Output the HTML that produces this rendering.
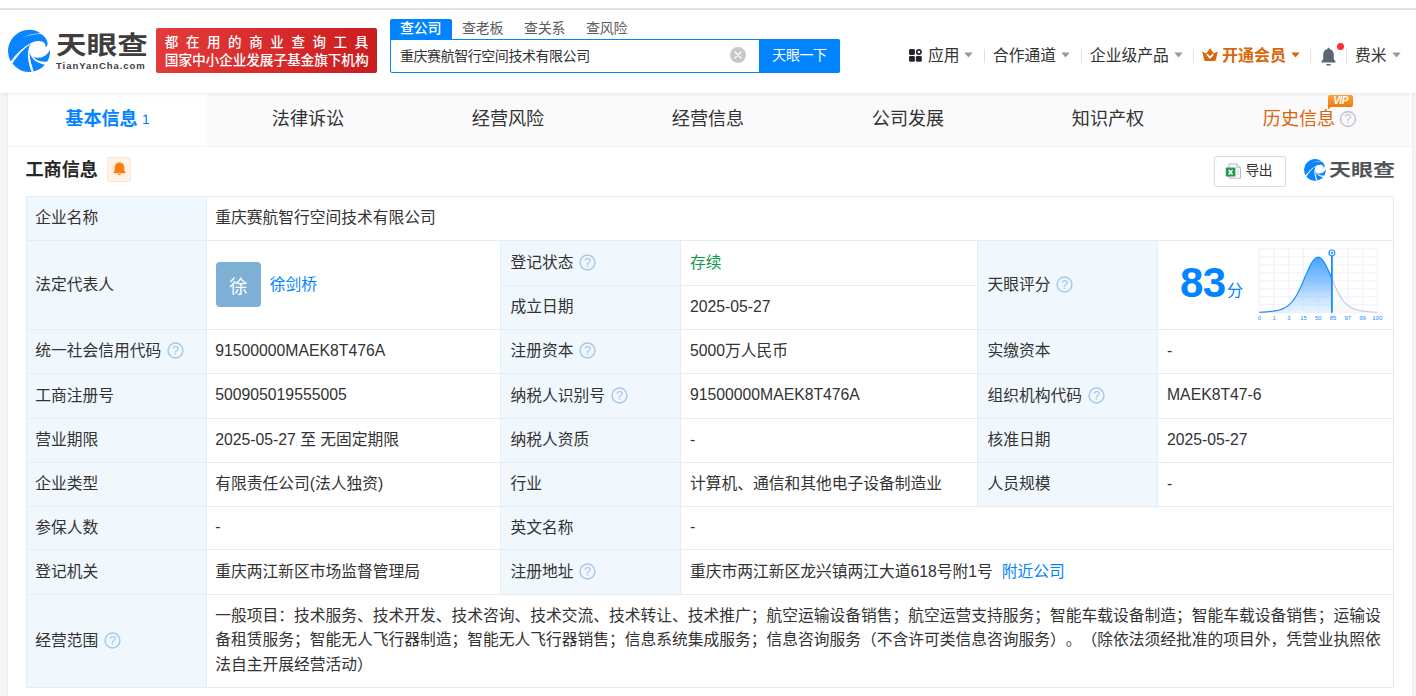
<!DOCTYPE html>
<html lang="zh-CN">
<head>
<meta charset="utf-8">
<title>重庆赛航智行空间技术有限公司 - 天眼查</title>
<style>
*{box-sizing:border-box;margin:0;padding:0}
html,body{width:1416px;height:696px;overflow:hidden}
body{background:#f5f5f5;font-family:"Liberation Sans","Noto Sans CJK SC",sans-serif;color:#333;position:relative;font-size:16px}
.abs{position:absolute}
#topstrip{left:0;top:0;width:1416px;height:8px;background:#fff}
#topline{left:0;top:8px;width:1416px;height:2px;background:#e4e4e4}
#header{left:0;top:10px;width:1416px;height:83px;background:#fff;box-shadow:0 1px 5px rgba(0,0,0,.08);z-index:5}
#card{left:7px;top:92px;width:1406px;height:604px;background:#fff;border-left:1px solid #ececec;border-right:1px solid #ececec}
#tabs{left:8px;top:92px;width:1401px;height:54px;background:#fafafa}
#tabline{left:8px;top:146px;width:1404px;height:1px;background:#f3f3f3}
.tab{position:absolute;top:0;height:54px;line-height:55px;transform:translateY(.300px);font-size:18.100px;color:#333;white-space:nowrap;text-align:center;width:200px}
.tab.on{color:#0084ff;font-weight:bold;left:0;width:199px}
.t{position:absolute;white-space:nowrap}
/* table */
.cell{position:absolute;border-right:1px solid #e3edf6;border-bottom:1px solid #e3edf6;font-size:15.750px;text-spacing-trim:space-all;line-height:22px;color:#333;white-space:nowrap}
.lab{background:#f0f7fd}
.cell span.tx{position:absolute;left:9px}
.q{display:inline-block;width:17px;height:17px;vertical-align:-3.200px;margin-left:6px}
a{color:#0084ff;text-decoration:none}
</style>
</head>
<body>
<div class="abs" id="topstrip"></div>
<div class="abs" id="topline"></div>
<div class="abs" id="card"></div>
<div class="abs" id="header">
  <!-- logo -->
  <svg class="abs" style="left:4px;top:16px" width="52" height="50" viewBox="0 0 724 696">
    <g fill="#0a84ff">
    <path d="M95,495 A295,295 0 0 1 510,100 C420,105 330,125 250,162 C330,135 430,112 512,112 C560,135 595,180 607,235 C610,262 595,285 575,300 C585,262 570,235 540,220 C495,200 425,205 372,240 C270,290 165,390 95,495 Z"/>
    <path d="M118,522 C185,412 285,310 365,255 C335,320 325,400 340,480 C350,540 365,590 385,637 A295,295 0 0 1 118,522 Z"/>
    <path d="M415,632 C390,570 370,500 362,440 C358,410 355,385 352,365 C375,440 440,500 500,520 C530,530 550,536 570,540 A295,295 0 0 1 415,632 Z"/>
    <path d="M395,420 C440,445 500,450 550,425 C595,400 625,370 640,330 A295,295 0 0 1 603,495 C540,510 450,480 395,420 Z"/>
    </g>
  </svg>
  <div class="t" style="left:56px;top:15px;font-size:25.500px;line-height:40px;font-weight:bold;color:#423d3d;transform:scaleX(1.2);transform-origin:0 0">天眼查</div>
  <div class="t" style="left:56px;top:49.500px;font-size:9.500px;line-height:12px;font-weight:bold;color:#423d3d;letter-spacing:0.95px">TianYanCha.com</div>
  <!-- red badge -->
  <div class="abs" style="left:156px;top:18px;width:221px;height:45px;border-radius:2px;background:linear-gradient(100deg,#e23c3c 0%,#d62828 60%,#c91d1d 100%)"></div>
  <div class="t" style="left:164.800px;top:22.500px;font-size:13.500px;line-height:19px;font-weight:500;color:#fff;letter-spacing:7.600px">都在用的商业查询工具</div>
  <div class="t" style="left:164.800px;top:40.500px;font-size:13.750px;line-height:19px;font-weight:500;color:#fff;letter-spacing:-.17px">国家中小企业发展子基金旗下机构</div>
  <!-- search -->
  <div class="abs" style="left:390px;top:9px;width:62px;height:21px;background:#0084ff;border-radius:2px 2px 0 0"></div>
  <div class="t" style="left:400px;top:8px;font-size:14px;line-height:20px;color:#fff;font-weight:500;letter-spacing:-.2px">查公司</div>
  <div class="t" style="left:462px;top:8px;font-size:14px;line-height:20px;color:#5c5c5c;letter-spacing:-.2px">查老板</div>
  <div class="t" style="left:524px;top:8px;font-size:14px;line-height:20px;color:#5c5c5c;letter-spacing:-.2px">查关系</div>
  <div class="t" style="left:586px;top:8px;font-size:14px;line-height:20px;color:#5c5c5c;letter-spacing:-.2px">查风险</div>
  <div class="abs" style="left:390px;top:29px;width:450px;height:34px;border:1px solid #0084ff;border-radius:0 2px 2px 2px;background:#fff"></div>
  <div class="t" style="left:400px;top:34.500px;font-size:14px;line-height:22px;color:#333;letter-spacing:-.45px">重庆赛航智行空间技术有限公司</div>
  <svg class="abs" style="left:730px;top:37px" width="16" height="16" viewBox="0 0 16 16"><circle cx="8" cy="8" r="8" fill="#c8c8c8"/><path d="M5 5 L11 11 M11 5 L5 11" stroke="#fff" stroke-width="1.300" stroke-linecap="round"/></svg>
  <div class="abs" style="left:759px;top:29px;width:81px;height:34px;background:#0084ff;border-radius:0 2px 2px 0"></div>
  <div class="t" style="left:759px;top:33.500px;width:81px;text-align:center;font-size:14px;line-height:22px;color:#fff;font-weight:normal;letter-spacing:-.4px">天眼一下</div>
  <!-- right nav -->
  <svg class="abs" style="left:909px;top:39px" width="13" height="13" viewBox="0 0 13 13"><rect x="0" y="0" width="5.900" height="5.900" rx="1.300" fill="#23272c"/><rect x="0" y="6.900" width="5.900" height="5.900" rx="1.300" fill="#23272c"/><rect x="6.900" y="6.900" width="5.900" height="5.900" rx="1.300" fill="#23272c"/><circle cx="9.900" cy="2.950" r="2.100" fill="none" stroke="#23272c" stroke-width="1.700"/></svg>
  <div class="t" style="left:928px;top:35px;font-size:15.750px;line-height:22px;color:#333">应用</div>
  <div class="t" style="left:993px;top:35px;font-size:15.750px;line-height:22px;color:#333">合作通道</div>
  <div class="t" style="left:1090px;top:35px;font-size:15.750px;line-height:22px;color:#333">企业级产品</div>
  <div class="t" style="left:1222px;top:35px;font-size:16px;line-height:22px;color:#d9660a;font-weight:bold">开通会员</div>
  <div class="t" style="left:1355px;top:35px;font-size:15.750px;line-height:22px;color:#333">费米</div>
<svg class="abs" style="left:964px;top:42px" width="9" height="6" viewBox="0 0 9 6"><path d="M0.800 0.500 L8.200 0.500 Q8.800 0.500 8.400 1 L4.900 5.100 Q4.500 5.500 4.100 5.100 L0.600 1 Q0.200 0.500 0.800 0.500 Z" fill="#9a9a9a"/></svg>
<div class="abs" style="left:984px;top:39px;width:1px;height:14px;background:#e2e2e2"></div>
<svg class="abs" style="left:1061px;top:42px" width="9" height="6" viewBox="0 0 9 6"><path d="M0.800 0.500 L8.200 0.500 Q8.800 0.500 8.400 1 L4.900 5.100 Q4.500 5.500 4.100 5.100 L0.600 1 Q0.200 0.500 0.800 0.500 Z" fill="#9a9a9a"/></svg>
<div class="abs" style="left:1081px;top:39px;width:1px;height:14px;background:#e2e2e2"></div>
<svg class="abs" style="left:1174px;top:42px" width="9" height="6" viewBox="0 0 9 6"><path d="M0.800 0.500 L8.200 0.500 Q8.800 0.500 8.400 1 L4.900 5.100 Q4.500 5.500 4.100 5.100 L0.600 1 Q0.200 0.500 0.800 0.500 Z" fill="#9a9a9a"/></svg>
<div class="abs" style="left:1193px;top:39px;width:1px;height:14px;background:#e2e2e2"></div>
<svg class="abs" style="left:1202px;top:38px" width="16" height="14" viewBox="0 0 16 14"><path d="M0.300 3.400 L4.200 5.600 L8 0.300 L11.800 5.600 L15.700 3.400 L14 11.600 Q13.800 13 12.400 13 L3.600 13 Q2.200 13 2 11.600 Z" fill="#d9660a"/><path d="M5.300 6.600 L8 9.800 L10.700 6.600" fill="none" stroke="#fff" stroke-width="1.700" stroke-linecap="round" stroke-linejoin="round"/></svg>
<svg class="abs" style="left:1290.5px;top:42px" width="9" height="6" viewBox="0 0 9 6"><path d="M0.800 0.500 L8.200 0.500 Q8.800 0.500 8.400 1 L4.900 5.100 Q4.500 5.500 4.100 5.100 L0.600 1 Q0.200 0.500 0.800 0.500 Z" fill="#d9660a"/></svg>
<div class="abs" style="left:1310px;top:39px;width:1px;height:14px;background:#e2e2e2"></div>
<svg class="abs" style="left:1320px;top:37px" width="17" height="20" viewBox="0 0 17 20"><path d="M8.500 0.800 C9.100 0.800 9.500 1.200 9.500 1.900 C12.300 2.500 13.800 4.800 13.800 7.500 L13.800 12.300 L15.600 14.600 Q16 15.500 15 15.500 L2 15.500 Q1 15.500 1.400 14.600 L3.200 12.300 L3.200 7.500 C3.200 4.800 4.700 2.500 7.500 1.900 C7.500 1.200 7.900 0.800 8.500 0.800 Z" fill="#5f6673"/><rect x="6.200" y="17" width="4.600" height="1.500" rx=".7" fill="#5f6673"/></svg>
<div class="abs" style="left:1337px;top:33px;width:7px;height:7px;border-radius:50%;background:#ff2a3a"></div>
<div class="abs" style="left:1346px;top:39px;width:1px;height:14px;background:#e2e2e2"></div>
<svg class="abs" style="left:1392px;top:42px" width="9" height="6" viewBox="0 0 9 6"><path d="M0.800 0.500 L8.200 0.500 Q8.800 0.500 8.400 1 L4.900 5.100 Q4.500 5.500 4.100 5.100 L0.600 1 Q0.200 0.500 0.800 0.500 Z" fill="#9a9a9a"/></svg>
</div>

<!-- tabs -->
<div class="abs" id="tabline"></div>
<div class="abs" id="tabs">
  <div class="abs" style="left:0;top:0;width:199px;height:54px;background:#fff"></div>
  <div class="tab on"><span style="position:relative;left:-6px">基本信息</span></div>
  <div class="t" style="left:134px;top:17.500px;font-size:13.800px;line-height:20px;font-family:'Liberation Sans',sans-serif;color:#0084ff;text-rendering:geometricPrecision">1</div>
  <div class="tab" style="left:200px">法律诉讼</div>
  <div class="tab" style="left:400px">经营风险</div>
  <div class="tab" style="left:600px">经营信息</div>
  <div class="tab" style="left:800px">公司发展</div>
  <div class="tab" style="left:1000px">知识产权</div>
  <div class="tab" style="left:1200px;color:#d9660a"><span style="position:relative;left:-9px">历史信息</span></div>
  <div class="abs" style="left:1320px;top:3px;width:25px;height:12px;border-radius:2px 2px 2px 0;background:linear-gradient(180deg,#f7a838,#ee7a0e)"></div>
  <svg class="abs" style="left:1320px;top:14px" width="4" height="4" viewBox="0 0 4 4"><path d="M0 0 L4 0 L0 3.500 Z" fill="#ee7a0e"/></svg>
  <div class="t" style="left:1320px;top:3px;width:25px;text-align:center;font-size:10px;line-height:12px;font-weight:bold;font-style:italic;color:#fff;letter-spacing:-.5px;font-family:'Liberation Sans',sans-serif">VIP</div>
  <svg class="abs" style="left:1331px;top:17.800px" width="18" height="18" viewBox="0 0 18 18"><circle cx="9" cy="9" r="7.400" fill="none" stroke="#c4cad1" stroke-width="1.600"/></svg>
  <div class="t" style="left:1332px;top:19px;width:16px;text-align:center;font-size:12.500px;line-height:17px;color:#bcc3cb;font-family:'Liberation Sans',sans-serif">?</div>

</div>
<!-- section title -->
<div class="t" style="left:25.500px;top:156.800px;font-size:18.100px;line-height:26px;font-weight:bold;color:#272727">工商信息</div>
<div class="abs" style="left:107px;top:157px;width:24px;height:25px;background:#fff3e8;border:1px solid #ffe4cc;border-radius:2.500px"></div>
<svg class="abs" style="left:112.500px;top:161.500px" width="13" height="14" viewBox="0 0 13 14"><path d="M6.500 0.400 C3.500 0.400 1.700 2.600 1.700 5.300 L1.700 8.600 L0.500 10.400 Q0.300 11.200 1.100 11.200 L11.900 11.200 Q12.700 11.200 12.500 10.400 L11.300 8.600 L11.300 5.300 C11.300 2.600 9.500 0.400 6.500 0.400 Z" fill="#ff7d0a"/><path d="M4.600 11.800 Q6.500 14.600 8.400 11.800 Z" fill="#ff7d0a"/></svg>
<!-- export -->
<div class="abs" style="left:1214px;top:156px;width:72px;height:31px;border:1px solid #dcdcdc;border-radius:2px;background:#fff"></div>
<div class="t" style="left:1245.500px;top:161px;font-size:13.750px;line-height:20px;color:#333;letter-spacing:-.5px">导出</div>
<!-- table -->
<div class="abs" style="left:26px;top:196px;width:1368px;height:492px;border-left:1px solid #e3edf6;border-top:1px solid #e3edf6"></div>
<div class="cell lab" style="left:27px;top:197px;width:180px;height:44px"><span class="tx" style="left:8.3px;top:10.1px;">企业名称</span></div>
<div class="cell" style="left:207px;top:197px;width:1187px;height:44px"><span class="tx" style="left:8.300px;top:10.1px;">重庆赛航智行空间技术有限公司</span></div>
<div class="cell lab" style="left:27px;top:241px;width:180px;height:89px"><span class="tx" style="left:8.3px;top:32.6px;">法定代表人</span></div>
<div class="cell" style="left:207px;top:241px;width:294px;height:89px"><span class="tx" style="left:8.300px;top:32.6px;"></span></div>
<div class="cell lab" style="left:501px;top:241px;width:180px;height:45px"><span class="tx" style="left:9.4px;top:10.6px;">登记状态<svg class="q" viewBox="0 0 17 17"><circle cx="8.500" cy="8.500" r="7.400" fill="none" stroke="#a9c9e8" stroke-width="1.500"/><text x="8.500" y="13" text-anchor="middle" font-size="12.500" fill="#a3c4e6" font-family="Liberation Sans, sans-serif">?</text></svg></span></div>
<div class="cell" style="left:681px;top:241px;width:297px;height:45px"><span class="tx" style="top:10.6px;"><span style="color:#0a9a48">存续</span></span></div>
<div class="cell lab" style="left:501px;top:286px;width:180px;height:44px"><span class="tx" style="left:9.4px;top:10.1px;">成立日期</span></div>
<div class="cell" style="left:681px;top:286px;width:297px;height:44px"><span class="tx" style="top:9.9px;">2025-05-27</span></div>
<div class="cell lab" style="left:978px;top:241px;width:180px;height:89px"><span class="tx" style="left:9.4px;top:32.6px;">天眼评分<svg class="q" viewBox="0 0 17 17"><circle cx="8.500" cy="8.500" r="7.400" fill="none" stroke="#a9c9e8" stroke-width="1.500"/><text x="8.500" y="13" text-anchor="middle" font-size="12.500" fill="#a3c4e6" font-family="Liberation Sans, sans-serif">?</text></svg></span></div>
<div class="cell" style="left:1158px;top:241px;width:236px;height:89px"><span class="tx" style="top:32.6px;"></span></div>
<div class="cell lab" style="left:27px;top:330px;width:180px;height:44px"><span class="tx" style="left:8.3px;top:10.1px;">统一社会信用代码<svg class="q" viewBox="0 0 17 17"><circle cx="8.500" cy="8.500" r="7.400" fill="none" stroke="#a9c9e8" stroke-width="1.500"/><text x="8.500" y="13" text-anchor="middle" font-size="12.500" fill="#a3c4e6" font-family="Liberation Sans, sans-serif">?</text></svg></span></div>
<div class="cell" style="left:207px;top:330px;width:294px;height:44px"><span class="tx" style="left:8.300px;top:9.9px;">91500000MAEK8T476A</span></div>
<div class="cell lab" style="left:501px;top:330px;width:180px;height:44px"><span class="tx" style="left:9.4px;top:10.1px;">注册资本<svg class="q" viewBox="0 0 17 17"><circle cx="8.500" cy="8.500" r="7.400" fill="none" stroke="#a9c9e8" stroke-width="1.500"/><text x="8.500" y="13" text-anchor="middle" font-size="12.500" fill="#a3c4e6" font-family="Liberation Sans, sans-serif">?</text></svg></span></div>
<div class="cell" style="left:681px;top:330px;width:297px;height:44px"><span class="tx" style="top:10.1px;">5000万人民币</span></div>
<div class="cell lab" style="left:978px;top:330px;width:180px;height:44px"><span class="tx" style="left:9.4px;top:10.1px;">实缴资本</span></div>
<div class="cell" style="left:1158px;top:330px;width:236px;height:44px"><span class="tx" style="top:9.9px;">-</span></div>
<div class="cell lab" style="left:27px;top:374px;width:180px;height:45px"><span class="tx" style="left:8.3px;top:10.6px;">工商注册号</span></div>
<div class="cell" style="left:207px;top:374px;width:294px;height:45px"><span class="tx" style="left:8.300px;top:10.4px;">500905019555005</span></div>
<div class="cell lab" style="left:501px;top:374px;width:180px;height:45px"><span class="tx" style="left:9.4px;top:10.6px;">纳税人识别号<svg class="q" viewBox="0 0 17 17"><circle cx="8.500" cy="8.500" r="7.400" fill="none" stroke="#a9c9e8" stroke-width="1.500"/><text x="8.500" y="13" text-anchor="middle" font-size="12.500" fill="#a3c4e6" font-family="Liberation Sans, sans-serif">?</text></svg></span></div>
<div class="cell" style="left:681px;top:374px;width:297px;height:45px"><span class="tx" style="top:10.4px;">91500000MAEK8T476A</span></div>
<div class="cell lab" style="left:978px;top:374px;width:180px;height:45px"><span class="tx" style="left:9.4px;top:10.6px;">组织机构代码<svg class="q" viewBox="0 0 17 17"><circle cx="8.500" cy="8.500" r="7.400" fill="none" stroke="#a9c9e8" stroke-width="1.500"/><text x="8.500" y="13" text-anchor="middle" font-size="12.500" fill="#a3c4e6" font-family="Liberation Sans, sans-serif">?</text></svg></span></div>
<div class="cell" style="left:1158px;top:374px;width:236px;height:45px"><span class="tx" style="top:10.4px;">MAEK8T47-6</span></div>
<div class="cell lab" style="left:27px;top:419px;width:180px;height:44px"><span class="tx" style="left:8.3px;top:10.1px;">营业期限</span></div>
<div class="cell" style="left:207px;top:419px;width:294px;height:44px"><span class="tx" style="left:8.300px;top:10.1px;">2025-05-27 至 无固定期限</span></div>
<div class="cell lab" style="left:501px;top:419px;width:180px;height:44px"><span class="tx" style="left:9.4px;top:10.1px;">纳税人资质</span></div>
<div class="cell" style="left:681px;top:419px;width:297px;height:44px"><span class="tx" style="top:9.9px;">-</span></div>
<div class="cell lab" style="left:978px;top:419px;width:180px;height:44px"><span class="tx" style="left:9.4px;top:10.1px;">核准日期</span></div>
<div class="cell" style="left:1158px;top:419px;width:236px;height:44px"><span class="tx" style="top:9.9px;">2025-05-27</span></div>
<div class="cell lab" style="left:27px;top:463px;width:180px;height:44px"><span class="tx" style="left:8.3px;top:10.1px;">企业类型</span></div>
<div class="cell" style="left:207px;top:463px;width:294px;height:44px"><span class="tx" style="left:8.300px;top:10.1px;">有限责任公司(法人独资)</span></div>
<div class="cell lab" style="left:501px;top:463px;width:180px;height:44px"><span class="tx" style="left:9.4px;top:10.1px;">行业</span></div>
<div class="cell" style="left:681px;top:463px;width:297px;height:44px"><span class="tx" style="top:10.1px;">计算机、通信和其他电子设备制造业</span></div>
<div class="cell lab" style="left:978px;top:463px;width:180px;height:44px"><span class="tx" style="left:9.4px;top:10.1px;">人员规模</span></div>
<div class="cell" style="left:1158px;top:463px;width:236px;height:44px"><span class="tx" style="top:9.9px;">-</span></div>
<div class="cell lab" style="left:27px;top:507px;width:180px;height:43px"><span class="tx" style="left:8.3px;top:9.6px;">参保人数</span></div>
<div class="cell" style="left:207px;top:507px;width:294px;height:43px"><span class="tx" style="left:8.300px;top:9.4px;">-</span></div>
<div class="cell lab" style="left:501px;top:507px;width:180px;height:43px"><span class="tx" style="left:9.4px;top:9.6px;">英文名称</span></div>
<div class="cell" style="left:681px;top:507px;width:713px;height:43px"><span class="tx" style="top:9.4px;">-</span></div>
<div class="cell lab" style="left:27px;top:550px;width:180px;height:45px"><span class="tx" style="left:8.3px;top:10.6px;">登记机关</span></div>
<div class="cell" style="left:207px;top:550px;width:294px;height:45px"><span class="tx" style="left:8.300px;top:10.6px;">重庆两江新区市场监督管理局</span></div>
<div class="cell lab" style="left:501px;top:550px;width:180px;height:45px"><span class="tx" style="left:9.4px;top:10.6px;">注册地址<svg class="q" viewBox="0 0 17 17"><circle cx="8.500" cy="8.500" r="7.400" fill="none" stroke="#a9c9e8" stroke-width="1.500"/><text x="8.500" y="13" text-anchor="middle" font-size="12.500" fill="#a3c4e6" font-family="Liberation Sans, sans-serif">?</text></svg></span></div>
<div class="cell" style="left:681px;top:550px;width:713px;height:45px"><span class="tx" style="top:10.6px;">重庆市两江新区龙兴镇两江大道618号附1号<a style="margin-left:9px">附近公司</a></span></div>
<div class="cell lab" style="left:27px;top:595px;width:180px;height:93px"><span class="tx" style="left:8.3px;top:34.6px;">经营范围<svg class="q" viewBox="0 0 17 17"><circle cx="8.500" cy="8.500" r="7.400" fill="none" stroke="#a9c9e8" stroke-width="1.500"/><text x="8.500" y="13" text-anchor="middle" font-size="12.500" fill="#a3c4e6" font-family="Liberation Sans, sans-serif">?</text></svg></span></div>
<div class="cell" style="left:207px;top:595px;width:1187px;height:93px;white-space:normal"><div style="position:absolute;left:8.300px;top:8.700px;width:1175px;line-height:24.600px;word-break:break-all">一般项目：技术服务、技术开发、技术咨询、技术交流、技术转让、技术推广；航空运输设备销售；航空运营支持服务；智能车载设备制造；智能车载设备销售；运输设备租赁服务；智能无人飞行器制造；智能无人飞行器销售；信息系统集成服务；信息咨询服务（不含许可类信息咨询服务）。（除依法须经批准的项目外，凭营业执照依法自主开展经营活动）</div></div>

<!-- avatar -->
<div class="abs" style="left:216px;top:262px;width:45px;height:45px;border-radius:4px;background:#7eb0d6"></div>
<div class="t" style="left:216px;top:264px;width:45px;text-align:center;font-size:18.300px;line-height:45px;color:#fff">徐</div>
<div class="t" style="left:269.700px;top:273.600px;font-size:15.750px;line-height:22px;color:#0084ff">徐剑桥</div>
<!-- score -->
<div class="t" style="left:1180px;top:258px;font-size:42px;line-height:50px;font-weight:bold;color:#0084ff;font-family:'Liberation Sans',sans-serif;letter-spacing:-.5px">83</div>
<div class="t" style="left:1227px;top:280px;font-size:16px;line-height:22px;color:#0084ff">分</div>
<!-- chart -->
<svg class="abs" style="left:1250px;top:240px" width="150" height="90" viewBox="0 0 150 90">
<defs><linearGradient id="cg" x1="0" y1="0" x2="0" y2="1"><stop offset="0" stop-color="#3d9dff" stop-opacity=".95"/><stop offset=".45" stop-color="#6ab4ff" stop-opacity=".75"/><stop offset="1" stop-color="#cfe6ff" stop-opacity=".45"/></linearGradient></defs>
<g stroke="#ecf3fb" stroke-width="1" fill="none"><line x1="9.30" y1="8.80" x2="9.30" y2="72.70"/><line x1="9.30" y1="8.80" x2="127.30" y2="8.80"/><line x1="24.05" y1="8.80" x2="24.05" y2="72.70"/><line x1="9.30" y1="16.79" x2="127.30" y2="16.79"/><line x1="38.80" y1="8.80" x2="38.80" y2="72.70"/><line x1="9.30" y1="24.78" x2="127.30" y2="24.78"/><line x1="53.55" y1="8.80" x2="53.55" y2="72.70"/><line x1="9.30" y1="32.76" x2="127.30" y2="32.76"/><line x1="68.30" y1="8.80" x2="68.30" y2="72.70"/><line x1="9.30" y1="40.75" x2="127.30" y2="40.75"/><line x1="83.05" y1="8.80" x2="83.05" y2="72.70"/><line x1="9.30" y1="48.74" x2="127.30" y2="48.74"/><line x1="97.80" y1="8.80" x2="97.80" y2="72.70"/><line x1="9.30" y1="56.72" x2="127.30" y2="56.72"/><line x1="112.55" y1="8.80" x2="112.55" y2="72.70"/><line x1="9.30" y1="64.71" x2="127.30" y2="64.71"/><line x1="127.30" y1="8.80" x2="127.30" y2="72.70"/><line x1="9.30" y1="72.70" x2="127.30" y2="72.70"/></g>
<path d="M81.90,38.79 L82.66,40.57 L83.41,42.34 L84.17,44.07 L84.93,45.78 L85.68,47.43 L86.44,49.04 L87.20,50.60 L87.95,52.09 L88.71,53.52 L89.47,54.88 L90.22,56.17 L90.98,57.39 L91.74,58.54 L92.49,59.62 L93.25,60.63 L94.01,61.57 L94.76,62.45 L95.52,63.26 L96.28,64.02 L97.03,64.71 L97.79,65.35 L98.55,65.94 L99.30,66.48 L100.06,66.97 L100.82,67.42 L101.57,67.84 L102.33,68.22 L103.09,68.56 L103.84,68.88 L104.60,69.16 L105.36,69.43 L106.11,69.67 L106.87,69.89 L107.63,70.09 L108.38,70.28 L109.14,70.45 L109.90,70.60 L110.65,70.75 L111.41,70.88 L112.17,71.01 L112.92,71.12 L113.68,71.23 L114.44,71.33 L115.19,71.42 L115.95,71.51 L116.71,71.59 L117.46,71.66 L118.22,71.73 L118.98,71.80 L119.73,71.86 L120.49,71.92 L121.25,71.97 L122.00,72.02 L122.76,72.07 L123.52,72.12 L124.27,72.16 L125.03,72.20 L125.79,72.23 L126.54,72.27 L127.30,72.30 L127.30,72.70 L81.90,72.70 Z" fill="#f7f8f9" fill-opacity=".9"/>
<path d="M81.90,38.79 L82.66,40.57 L83.41,42.34 L84.17,44.07 L84.93,45.78 L85.68,47.43 L86.44,49.04 L87.20,50.60 L87.95,52.09 L88.71,53.52 L89.47,54.88 L90.22,56.17 L90.98,57.39 L91.74,58.54 L92.49,59.62 L93.25,60.63 L94.01,61.57 L94.76,62.45 L95.52,63.26 L96.28,64.02 L97.03,64.71 L97.79,65.35 L98.55,65.94 L99.30,66.48 L100.06,66.97 L100.82,67.42 L101.57,67.84 L102.33,68.22 L103.09,68.56 L103.84,68.88 L104.60,69.16 L105.36,69.43 L106.11,69.67 L106.87,69.89 L107.63,70.09 L108.38,70.28 L109.14,70.45 L109.90,70.60 L110.65,70.75 L111.41,70.88 L112.17,71.01 L112.92,71.12 L113.68,71.23 L114.44,71.33 L115.19,71.42 L115.95,71.51 L116.71,71.59 L117.46,71.66 L118.22,71.73 L118.98,71.80 L119.73,71.86 L120.49,71.92 L121.25,71.97 L122.00,72.02 L122.76,72.07 L123.52,72.12 L124.27,72.16 L125.03,72.20 L125.79,72.23 L126.54,72.27 L127.30,72.30" fill="none" stroke="#c3cdd7" stroke-width="1.200"/>
<path d="M9.30,72.28 L10.51,72.23 L11.72,72.17 L12.93,72.10 L14.14,72.03 L15.35,71.94 L16.56,71.85 L17.77,71.75 L18.98,71.64 L20.19,71.51 L21.40,71.37 L22.61,71.22 L23.82,71.04 L25.03,70.84 L26.24,70.62 L27.45,70.36 L28.66,70.07 L29.87,69.73 L31.08,69.35 L32.29,68.90 L33.50,68.39 L34.71,67.79 L35.92,67.11 L37.13,66.32 L38.34,65.41 L39.55,64.37 L40.76,63.18 L41.97,61.84 L43.18,60.33 L44.39,58.65 L45.60,56.79 L46.81,54.74 L48.02,52.52 L49.23,50.14 L50.44,47.60 L51.65,44.93 L52.86,42.17 L54.07,39.33 L55.28,36.47 L56.49,33.63 L57.70,30.86 L58.91,28.22 L60.12,25.75 L61.33,23.51 L62.54,21.54 L63.75,19.90 L64.96,18.63 L66.17,17.74 L67.38,17.28 L68.59,17.24 L69.80,17.62 L71.01,18.43 L72.22,19.63 L73.43,21.21 L74.64,23.11 L75.85,25.30 L77.06,27.73 L78.27,30.35 L79.48,33.10 L80.69,35.93 L81.90,38.79 L81.90,72.70 L9.30,72.70 Z" fill="url(#cg)"/>
<path d="M9.30,72.28 L10.51,72.23 L11.72,72.17 L12.93,72.10 L14.14,72.03 L15.35,71.94 L16.56,71.85 L17.77,71.75 L18.98,71.64 L20.19,71.51 L21.40,71.37 L22.61,71.22 L23.82,71.04 L25.03,70.84 L26.24,70.62 L27.45,70.36 L28.66,70.07 L29.87,69.73 L31.08,69.35 L32.29,68.90 L33.50,68.39 L34.71,67.79 L35.92,67.11 L37.13,66.32 L38.34,65.41 L39.55,64.37 L40.76,63.18 L41.97,61.84 L43.18,60.33 L44.39,58.65 L45.60,56.79 L46.81,54.74 L48.02,52.52 L49.23,50.14 L50.44,47.60 L51.65,44.93 L52.86,42.17 L54.07,39.33 L55.28,36.47 L56.49,33.63 L57.70,30.86 L58.91,28.22 L60.12,25.75 L61.33,23.51 L62.54,21.54 L63.75,19.90 L64.96,18.63 L66.17,17.74 L67.38,17.28 L68.59,17.24 L69.80,17.62 L71.01,18.43 L72.22,19.63 L73.43,21.21 L74.64,23.11 L75.85,25.30 L77.06,27.73 L78.27,30.35 L79.48,33.10 L80.69,35.93 L81.90,38.79" fill="none" stroke="#1a8aff" stroke-width="1.200"/>
<line x1="81.90" y1="16" x2="81.90" y2="72.70" stroke="#1a8aff" stroke-width="1.800"/>
<circle cx="81.90" cy="12.90" r="2.900" fill="#fff" stroke="#1a8aff" stroke-width="1.200"/>
<circle cx="81.90" cy="12.90" r="1.100" fill="#1a8aff"/>
<g font-family="Liberation Sans, sans-serif" font-size="6" fill="#1f8aff" text-anchor="middle"><text x="9.30" y="80.20">0</text><text x="24.05" y="80.20">1</text><text x="38.80" y="80.20">3</text><text x="53.55" y="80.20">15</text><text x="68.30" y="80.20">50</text><text x="83.05" y="80.20">85</text><text x="97.80" y="80.20">97</text><text x="112.55" y="80.20">99</text><text x="127.30" y="80.20">100</text></g>
</svg>

<!-- export icon -->
<svg class="abs" style="left:1225px;top:163px" width="17" height="16" viewBox="0 0 17 16"><path d="M4 0.900 L11.800 0.900 L15.600 4.700 L15.600 15.100 L4 15.100 Z" fill="#fff" stroke="#b4b9c3" stroke-width="1"/><path d="M11.800 0.900 L11.800 4.700 L15.600 4.700" fill="#eceef2" stroke="#b4b9c3" stroke-width="1"/><path d="M11.500 7 L14 7 M11.500 9.300 L14 9.300 M11.500 11.600 L14 11.600" stroke="#d4d7dd" stroke-width="1"/><rect x="0.800" y="4.600" width="9.600" height="9" rx=".6" fill="#1f9d4b"/><path d="M3.700 6.900 L7.500 11.400 M7.500 6.900 L3.700 11.400" stroke="#fff" stroke-width="1.500"/></svg>
<!-- watermark logo -->
<svg class="abs" style="left:1301.800px;top:156.500px" width="27" height="26" viewBox="0 0 724 696"><g fill="#0a84ff" stroke="#fff" stroke-width="10" paint-order="stroke">
    <path d="M95,495 A295,295 0 0 1 510,100 C420,105 330,125 250,162 C330,135 430,112 512,112 C560,135 595,180 607,235 C610,262 595,285 575,300 C585,262 570,235 540,220 C495,200 425,205 372,240 C270,290 165,390 95,495 Z"/>
    <path d="M118,522 C185,412 285,310 365,255 C335,320 325,400 340,480 C350,540 365,590 385,637 A295,295 0 0 1 118,522 Z"/>
    <path d="M415,632 C390,570 370,500 362,440 C358,410 355,385 352,365 C375,440 440,500 500,520 C530,530 550,536 570,540 A295,295 0 0 1 415,632 Z"/>
    <path d="M395,420 C440,445 500,450 550,425 C595,400 625,370 640,330 A295,295 0 0 1 603,495 C540,510 450,480 395,420 Z"/>
    </g></svg>
<div class="t" style="left:1329px;top:155.500px;font-size:17.300px;line-height:28px;font-weight:bold;color:#50545c;transform:scaleX(1.27);transform-origin:0 0">天眼查</div>
</body>
</html>
